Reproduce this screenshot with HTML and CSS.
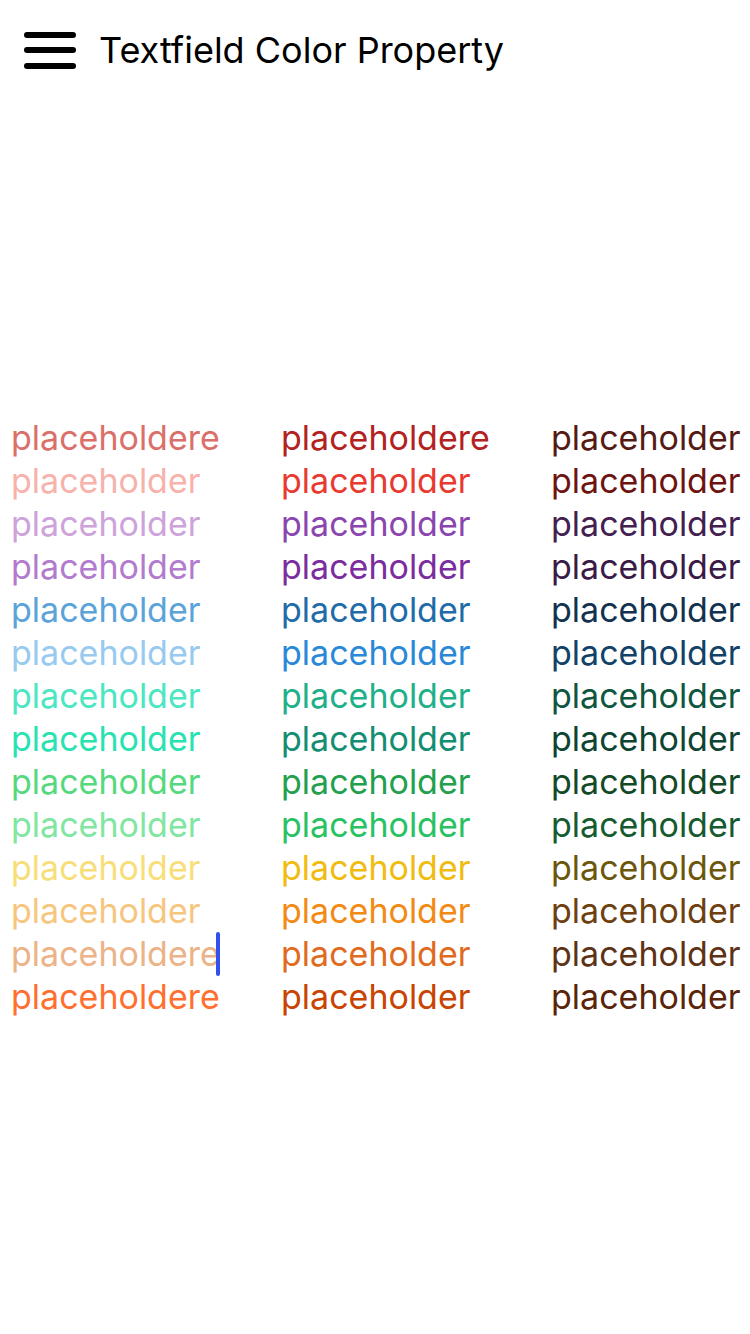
FILE: index.html
```html
<!doctype html>
<html lang="en">
<head>
    <meta charset="UTF-8">
    <meta name="viewport" content="width=device-width, initial-scale=1.0">
    <title>Textfield Color Property</title>
    <link rel="stylesheet" href="styles.css">
</head>
<body>
    <header class="app-bar">
        <button class="menu-btn" aria-label="Menu">
            <span></span><span></span><span></span>
        </button>
        <h1 class="app-title">Textfield Color Property</h1>
    </header>

    <main class="fields">
        <div class="column">
            <div class="field pomegranate-l">placeholdere</div>
            <div class="field alizarin-l">placeholder</div>
            <div class="field amethyst-l">placeholder</div>
            <div class="field wisteria-l">placeholder</div>
            <div class="field belize-l">placeholder</div>
            <div class="field peter-l">placeholder</div>
            <div class="field turquoise-l">placeholder</div>
            <div class="field greensea-l">placeholder</div>
            <div class="field nephritis-l">placeholder</div>
            <div class="field emerald-l">placeholder</div>
            <div class="field sunflower-l">placeholder</div>
            <div class="field orange-l">placeholder</div>
            <div class="field carrot-l">placeholdere<span class="caret"></span></div>
            <div class="field pumpkin-l">placeholdere</div>
        </div>
        <div class="column">
            <div class="field pomegranate">placeholdere</div>
            <div class="field alizarin">placeholder</div>
            <div class="field amethyst">placeholder</div>
            <div class="field wisteria">placeholder</div>
            <div class="field belize">placeholder</div>
            <div class="field peter">placeholder</div>
            <div class="field turquoise">placeholder</div>
            <div class="field greensea">placeholder</div>
            <div class="field nephritis">placeholder</div>
            <div class="field emerald">placeholder</div>
            <div class="field sunflower">placeholder</div>
            <div class="field orange">placeholder</div>
            <div class="field carrot">placeholder</div>
            <div class="field pumpkin">placeholder</div>
        </div>
        <div class="column">
            <div class="field pomegranate-d">placeholder</div>
            <div class="field alizarin-d">placeholder</div>
            <div class="field amethyst-d">placeholder</div>
            <div class="field wisteria-d">placeholder</div>
            <div class="field belize-d">placeholder</div>
            <div class="field peter-d">placeholder</div>
            <div class="field turquoise-d">placeholder</div>
            <div class="field greensea-d">placeholder</div>
            <div class="field nephritis-d">placeholder</div>
            <div class="field emerald-d">placeholder</div>
            <div class="field sunflower-d">placeholder</div>
            <div class="field orange-d">placeholder</div>
            <div class="field carrot-d">placeholder</div>
            <div class="field pumpkin-d">placeholder</div>
        </div>
    </main>
</body>
</html>
```

FILE: styles.css
```css
body {
    margin: 0;
    background-color: white;
    font-family: Inter, "Noto Sans", sans-serif;
    overflow: hidden;
}

.app-bar {
    display: flex;
    align-items: center;
    height: 100px;
    padding-left: 24px;
}

.menu-btn {
    display: flex;
    flex-direction: column;
    justify-content: space-between;
    width: 52px;
    height: 37px;
    padding: 0;
    margin: 0 23px 0 0;
    border: none;
    background: none;
}

.menu-btn span {
    display: block;
    height: 6px;
    border-radius: 3px;
    background-color: black;
}

.app-title {
    margin: 0;
    font-size: 36px;
    font-weight: 400;
    color: black;
}

.fields {
    display: grid;
    grid-template-columns: 270px 270px 1fr;
    margin-top: 316px;
    padding-left: 11px;
}

.field {
    font-size: 34px;
    line-height: 43px;
    height: 43px;
    white-space: nowrap;
}

.caret {
    display: inline-block;
    width: 4px;
    height: 44px;
    margin-left: -4px;
    border-radius: 2px;
    background-color: #3050f0;
    vertical-align: -10px;
}

/* light column */
.pomegranate-l { color: #db706a; }
.alizarin-l { color: #f7b2ac; }
.amethyst-l { color: #cda3da; }
.wisteria-l { color: #b27bcd; }
.belize-l { color: #5ba3d9; }
.peter-l { color: #98caf0; }
.turquoise-l { color: #4ce6c3; }
.greensea-l { color: #28e2b2; }
.nephritis-l { color: #56d97e; }
.emerald-l { color: #80e6a2; }
.sunflower-l { color: #f8de78; }
.orange-l { color: #f7c67e; }
.carrot-l { color: #ebb387; }
.pumpkin-l { color: #ff7030; }

/* base column */
.pomegranate { color: #b3221e; }
.alizarin { color: #e83a30; }
.amethyst { color: #8a45ae; }
.wisteria { color: #7b2d9e; }
.belize { color: #1f6ca8; }
.peter { color: #2a88d8; }
.turquoise { color: #1fb08a; }
.greensea { color: #148e72; }
.nephritis { color: #22a04e; }
.emerald { color: #28c262; }
.sunflower { color: #f0bc10; }
.orange { color: #f28a14; }
.carrot { color: #e06a20; }
.pumpkin { color: #c84400; }

/* dark column */
.pomegranate-d { color: #561a14; }
.alizarin-d { color: #6e1410; }
.amethyst-d { color: #43204f; }
.wisteria-d { color: #3a1a46; }
.belize-d { color: #12324f; }
.peter-d { color: #134268; }
.turquoise-d { color: #0f5640; }
.greensea-d { color: #0e4432; }
.nephritis-d { color: #124a28; }
.emerald-d { color: #165a30; }
.sunflower-d { color: #6b560c; }
.orange-d { color: #6e4010; }
.carrot-d { color: #5e3214; }
.pumpkin-d { color: #5a2408; }
```
